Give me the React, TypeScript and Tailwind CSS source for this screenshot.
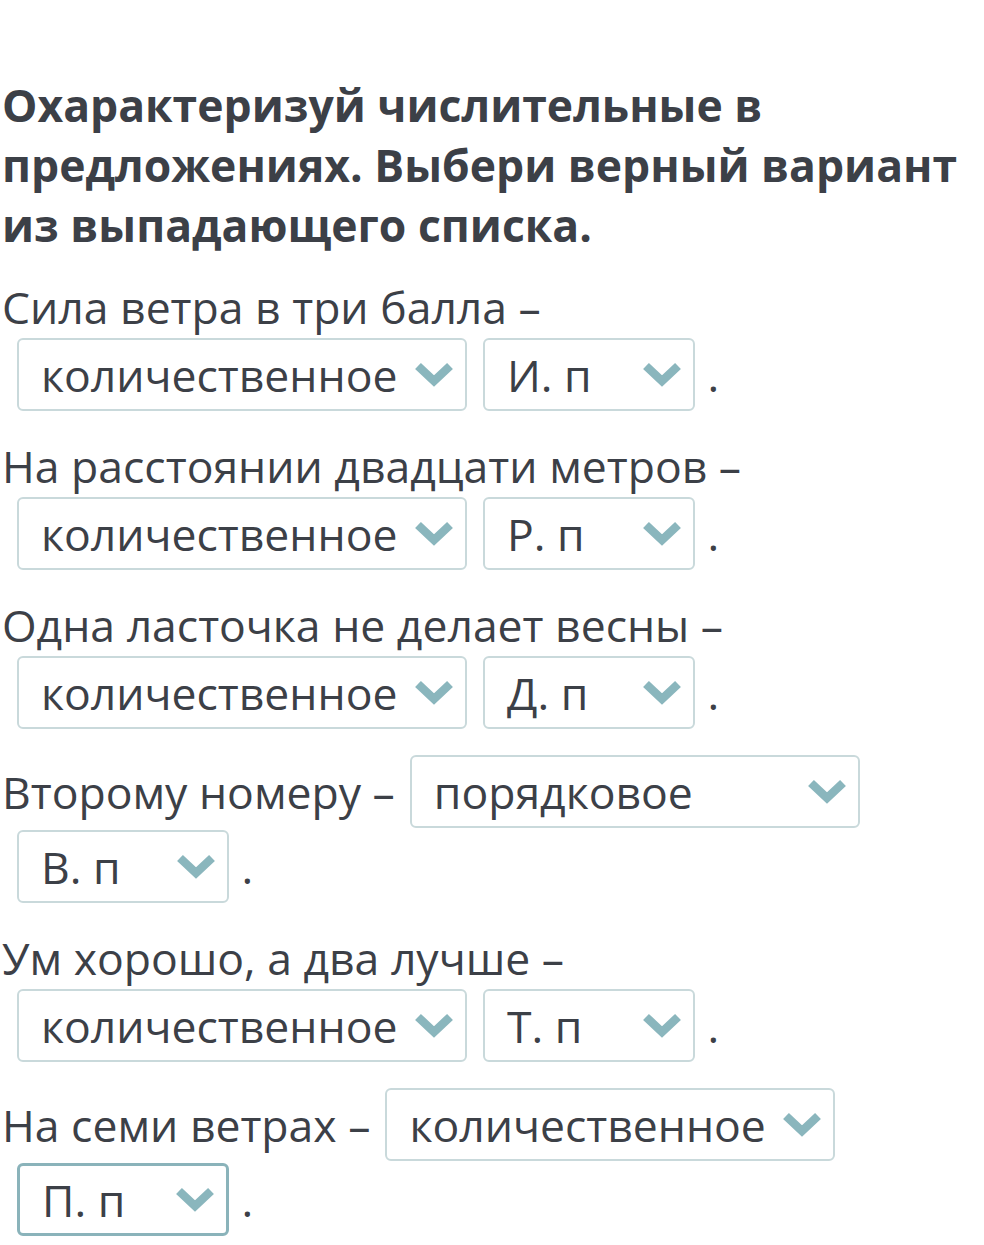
import React from 'react';

type Part = { text: string; wide: boolean; focused?: boolean };

const rows: { label: string; parts: Part[] }[] = [
  { label: 'Сила ветра в три балла –', parts: [{ text: 'количественное', wide: true }, { text: 'И. п', wide: false }] },
  { label: 'На расстоянии двадцати метров –', parts: [{ text: 'количественное', wide: true }, { text: 'Р. п', wide: false }] },
  { label: 'Одна ласточка не делает весны –', parts: [{ text: 'количественное', wide: true }, { text: 'Д. п', wide: false }] },
  { label: 'Второму номеру –', parts: [{ text: 'порядковое', wide: true }, { text: 'В. п', wide: false }] },
  { label: 'Ум хорошо, а два лучше –', parts: [{ text: 'количественное', wide: true }, { text: 'Т. п', wide: false }] },
  { label: 'На семи ветрах –', parts: [{ text: 'количественное', wide: true }, { text: 'П. п', wide: false, focused: true }] },
];

function Chevron() {
  return (
    <svg width="40" height="27" viewBox="0 0 40 27" className="shrink-0">
      <path d="M4 5 L20 20 L36 5" fill="none" stroke="#8ab6bd" strokeWidth="8.5" strokeLinecap="butt" strokeLinejoin="miter" />
    </svg>
  );
}

function Select({ part }: { part: Part }) {
  return (
    <span
      className={
        'inline-flex items-center justify-between align-baseline h-[73px] my-[1px] ml-[15px] mr-[1px] pl-[22px] pr-[11px] rounded-[6px] bg-white ' +
        (part.wide ? 'w-[450px] ' : 'w-[212px] ') +
        (part.focused ? 'border-[3px] border-[#8ab3ba]' : 'border-2 border-[#c9d9db]')
      }
    >
      <span className="whitespace-nowrap">{part.text}</span>
      <Chevron />
    </span>
  );
}

export default function App() {
  return (
    <div className="min-h-screen bg-white text-[#3c4047] pl-[2px] pr-2 pt-[75px]" style={{ fontFamily: '"Open Sans", "Noto Sans", sans-serif' }}>
      <h2 className="text-[44.5px] leading-[60px] font-bold">
        Охарактеризуй числительные в предложениях. Выбери верный вариант из выпадающего списка.
      </h2>
      <div className="mt-[22px] text-[44.5px] leading-[60px]">
        {rows.map((r, i) => (
          <p key={i} className="mb-[24px]">
            {r.label}
            {r.parts.map((p, j) => (
              <Select key={j} part={p} />
            ))}
            {' .'}
          </p>
        ))}
      </div>
    </div>
  );
}
